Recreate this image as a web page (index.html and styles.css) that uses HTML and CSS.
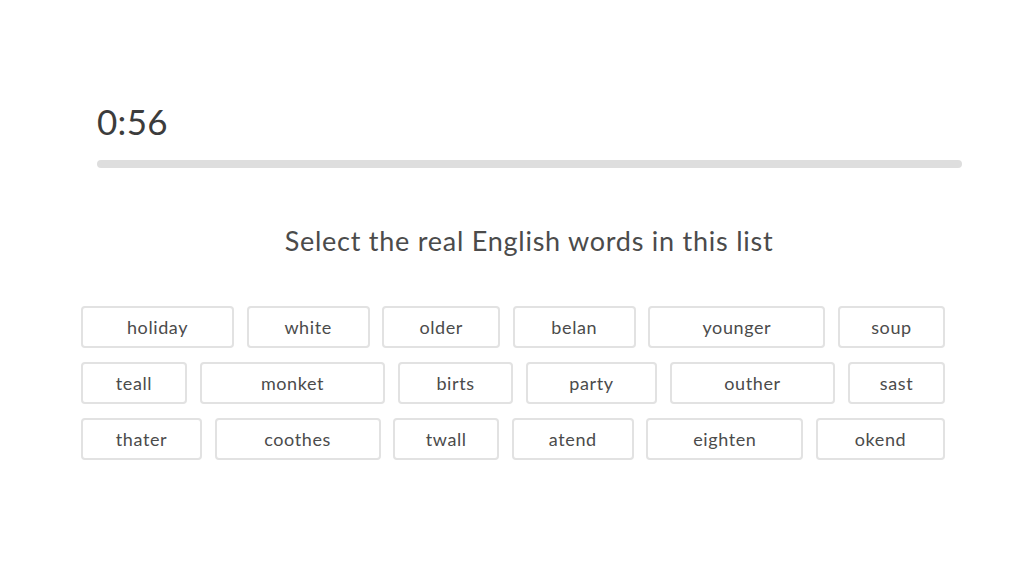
FILE: index.html
```html
<!DOCTYPE html>
<html>
  <head>
    <meta charset="utf8" />
    <title> Word Check </title>
    <link rel="stylesheet" href="styles.css">
  </head>
  <body>
    <div id="quiz">
      <div class="timer">0:56</div>
      <div class="track"><div class="fill"></div></div>
      <h1 class="prompt">Select the real English words in this list</h1>
      <div class="words">
        <div class="row">
          <button class="word" style="width: 153px">holiday</button>
          <button class="word" style="width: 123px">white</button>
          <button class="word" style="width: 118px">older</button>
          <button class="word" style="width: 123px">belan</button>
          <button class="word" style="width: 177px">younger</button>
          <button class="word" style="width: 107px">soup</button>
        </div>
        <div class="row">
          <button class="word" style="width: 106px">teall</button>
          <button class="word" style="width: 185px">monket</button>
          <button class="word" style="width: 115px">birts</button>
          <button class="word" style="width: 131px">party</button>
          <button class="word" style="width: 165px">outher</button>
          <button class="word" style="width: 97px">sast</button>
        </div>
        <div class="row">
          <button class="word" style="width: 121px">thater</button>
          <button class="word" style="width: 166px">coothes</button>
          <button class="word" style="width: 106px">twall</button>
          <button class="word" style="width: 122px">atend</button>
          <button class="word" style="width: 157px">eighten</button>
          <button class="word" style="width: 129px">okend</button>
        </div>
      </div>
    </div>
  </body>
</html>
```

FILE: styles.css
```css
html, body {
  margin: 0;
  overflow: hidden;
}

body {
  background: #fff;
  font-family: Lato, "Open Sans", sans-serif;
  color: #4b4b4b;
}

#quiz {
  display: flow-root;
  width: 1024px;
  height: 576px;
}

.timer {
  margin: 100px 0 0 97px;
  font-size: 35px;
  line-height: 1.2;
  letter-spacing: 0.3px;
  color: #3c3c3c;
}

.track {
  margin: 18px 0 0 97px;
  width: 865px;
  height: 8px;
  border-radius: 4px;
  background: #dedede;
}

.prompt {
  margin: 57px 0 0;
  padding-left: 34px;
  text-align: center;
  font-size: 27px;
  font-weight: normal;
  line-height: 1.2;
  letter-spacing: 0.75px;
  color: #4b4b4b;
}

.words {
  margin: 49px 0 0 81px;
  width: 864px;
  display: flex;
  flex-direction: column;
  gap: 14px;
}

.row {
  display: flex;
  justify-content: space-between;
}

.word {
  height: 42px;
  padding: 0;
  background: #fff;
  border: 2px solid #e2e2e2;
  border-radius: 4px;
  font-family: inherit;
  font-size: 18px;
  letter-spacing: 0.6px;
  color: #4b4b4b;
  cursor: pointer;
}
```
